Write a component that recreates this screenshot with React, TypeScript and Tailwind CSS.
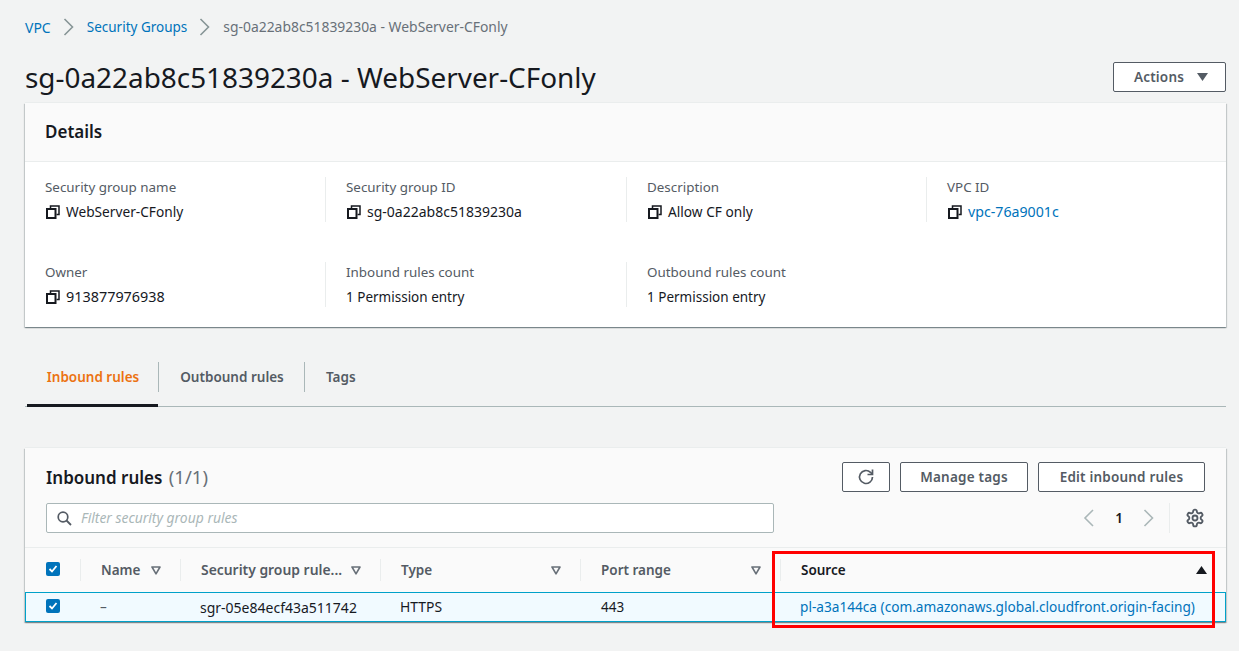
const font = { fontFamily: '"Noto Sans", sans-serif' };

const CopyIcon = () => (
  <svg width="14" height="14" viewBox="0 0 14 14" fill="none" className="ml-[1px] shrink-0 text-[#16191f]">
    <path d="M4.5 3.5V1h8.5v8.5h-2.5" stroke="currentColor" strokeWidth="1.5" />
    <rect x="1" y="4" width="8.5" height="9" stroke="currentColor" strokeWidth="2" />
  </svg>
);

const Chevron = ({ left, color }: { left?: boolean; color: string }) => (
  <svg width="12" height="18" viewBox="0 0 12 18" fill="none">
    <path d={left ? 'M11 1 3 9l8 8' : 'M1.5 1l8 8-8 8'} stroke={color} strokeWidth="1.6" />
  </svg>
);

const FilterIcon = () => (
  <svg width="10" height="9" viewBox="0 0 10 9" fill="none" className="shrink-0">
    <path d="M1 1h8L5 7.8z" stroke="#687078" strokeWidth="1.6" strokeLinejoin="round" />
  </svg>
);

const Check = () => (
  <span className="flex h-[14px] w-[14px] items-center justify-center rounded-[2px] bg-[#0073bb]">
    <svg width="10" height="10" viewBox="0 0 10 10" fill="none">
      <path d="M1.5 5 4 7.5 8.5 2" stroke="#fff" strokeWidth="1.8" />
    </svg>
  </span>
);

const Field = ({ label, value, copy, link, first, size = 'text-[13.5px]' }: { label: string; value: string; copy?: boolean; link?: boolean; first?: boolean; size?: string }) => (
  <div className={first ? 'h-[45px] pl-0' : 'h-[45px] border-l border-[#eaeded] pl-5'}>
    <div className="h-[21px] text-[13.4px] leading-[21px] text-[#545b64]">{label}</div>
    <div className="mt-[4px] flex items-center gap-[6px] leading-[20px] text-[#16191f]">
      {copy && <CopyIcon />}
      <span className={`${size} ${link ? 'text-[#0073bb]' : ''}`}>{value}</span>
    </div>
  </div>
);

const HeadCell = ({ label, dark, size = 'text-[13.5px]' }: { label: string; dark?: boolean; size?: string }) => (
  <div className="my-auto flex h-[22px] items-center justify-between border-l border-[#eaeded] pr-[19px] pl-5">
    <span className={`${size} font-semibold whitespace-nowrap ${dark ? 'text-[#16191f]' : 'text-[#545b64]'}`}>{label}</span>
    {dark ? (
      <svg width="11" height="8" viewBox="0 0 11 8"><path d="M5.5 0L11 8H0z" fill="#16191f" /></svg>
    ) : (
      <FilterIcon />
    )}
  </div>
);

const Button = ({ children, className }: { children: React.ReactNode; className: string }) => (
  <div className={`flex h-[30px] items-center justify-center rounded-[2px] border border-[#545b64] bg-white text-[13.5px] font-semibold tracking-[0.2px] text-[#545b64] ${className}`}>
    {children}
  </div>
);

export default function App() {
  return (
    <div style={font} className="relative h-[651px] w-[1239px] overflow-hidden bg-[#f2f3f3] pr-[13px] pl-[25px]">
      {/* breadcrumb */}
      <div className="flex h-[54px] items-center text-[13.5px]">
        <span className="text-[14px] text-[#0073bb]">VPC</span>
        <span className="mx-[12px]"><Chevron color="#879596" /></span>
        <span className="text-[#0073bb]">Security Groups</span>
        <span className="mx-[12px]"><Chevron color="#879596" /></span>
        <span className="text-[13.9px] text-[#687078]">sg-0a22ab8c51839230a - WebServer-CFonly</span>
      </div>

      {/* title */}
      <div className="flex h-[46px] items-center justify-between">
        <h1 className="text-[27.9px] leading-[46px] font-normal text-[#16191f]">sg-0a22ab8c51839230a - WebServer-CFonly</h1>
        <Button className="w-[113px] gap-[13px] pl-[3px]">
          Actions
          <svg width="11" height="8" viewBox="0 0 11 8"><path d="M0 0h11L5.5 8z" fill="#545b64" /></svg>
        </Button>
      </div>

      {/* details card */}
      <section className="mt-[3px] h-[224px] bg-white shadow-[0_1px_1px_0_rgba(0,28,36,0.3),1px_1px_1px_0_rgba(0,28,36,0.15),-1px_1px_1px_0_rgba(0,28,36,0.15),0_-1px_0_0_#eaeded]">
        <div className="flex h-[59px] items-center border-b border-[#eaeded] bg-[#fafafa] pl-5 text-[17px] font-semibold text-[#16191f]">Details</div>
        <div className="grid grid-cols-[280px_301px_300px_1fr] gap-y-[40px] pt-[15px] pl-5">
          <Field first label="Security group name" value="WebServer-CFonly" copy size="text-[13.7px]" />
          <Field label="Security group ID" value="sg-0a22ab8c51839230a" copy size="text-[14px]" />
          <Field label="Description" value="Allow CF only" copy size="text-[13.7px]" />
          <Field label="VPC ID" value="vpc-76a9001c" copy link size="text-[14.2px]" />
          <Field first label="Owner" value="913877976938" copy size="text-[14.4px]" />
          <Field label="Inbound rules count" value="1 Permission entry" />
          <Field label="Outbound rules count" value="1 Permission entry" />
        </div>
      </section>

      {/* tabs */}
      <div className="mt-[33px] flex h-[47px] border-b border-[#aab7b8] pl-[2px] text-[13.5px] font-semibold">
        <div className="flex h-[47px] w-[131px] items-start justify-center border-b-[3px] border-[#16191f] pt-[7px] pl-[1px] text-[#ec7211]">
          Inbound rules
        </div>
        <div className="mt-[2px] flex h-[30px] w-[146px] items-center justify-center border-l border-[#aab7b8] pl-[1px] text-[#545b64]">Outbound rules</div>
        <div className="mt-[2px] flex h-[30px] w-[73px] items-center border-l border-[#aab7b8] pl-[21px] text-[#545b64]">Tags</div>
      </div>

      {/* inbound rules card */}
      <section className="mt-[41px] bg-[#fafafa] shadow-[0_1px_1px_0_rgba(0,28,36,0.3),1px_1px_1px_0_rgba(0,28,36,0.15),-1px_1px_1px_0_rgba(0,28,36,0.15),0_-1px_0_0_#eaeded]">
        <div className="flex h-[100px] flex-col border-b border-[#eaeded] pt-[14px] pr-[21px] pl-[21px]">
          <div className="flex h-[30px] items-center justify-between">
            <div className="text-[17px] font-semibold text-[#16191f]">
              Inbound rules <span className="ml-[2px] text-[18.5px] font-normal text-[#687078]">(1/1)</span>
            </div>
            <div className="flex gap-[10px]">
              <Button className="w-[48px]">
                <svg width="18" height="18" viewBox="0 0 18 18" fill="none">
                  <path d="M15.5 9a6.5 6.5 0 1 1-2-4.7L15.3 6" stroke="#545b64" strokeWidth="1.7" />
                  <path d="M15.5 1.5v5h-5" stroke="#545b64" strokeWidth="1.7" />
                </svg>
              </Button>
              <Button className="w-[128px]">Manage tags</Button>
              <Button className="w-[167px]">Edit inbound rules</Button>
            </div>
          </div>
          <div className="mt-[11px] flex h-[30px] items-center">
            <div className="flex h-[30px] w-[728px] items-center gap-[9px] rounded-[2px] border border-[#aab7b8] bg-white pl-[10px]">
              <svg width="15" height="15" viewBox="0 0 15 15" fill="none">
                <circle cx="6" cy="6" r="4.8" stroke="#545b64" strokeWidth="1.7" />
                <path d="M9.5 9.5 14 14" stroke="#545b64" strokeWidth="1.8" />
              </svg>
              <span className="text-[13.9px] text-[#aab7b8] italic">Filter security group rules</span>
            </div>
            <div className="ml-auto flex items-center">
              <span className="ml-[2px]"><Chevron left color="#aab7b8" /></span>
              <span className="mr-[20px] ml-[21px] text-[13.5px] font-semibold text-[#16191f]">1</span>
              <Chevron color="#aab7b8" />
              <span className="mr-[15px] ml-[14px] h-[30px] border-l border-[#eaeded]" />
              <svg width="20" height="20" viewBox="0 0 24 24" fill="none" stroke="#545b64" strokeWidth="2.2">
                <path d="M12.2 2h-.4a2 2 0 0 0-2 2v.2a2 2 0 0 1-1 1.7l-.4.3a2 2 0 0 1-2 0l-.2-.1a2 2 0 0 0-2.7.7l-.2.4a2 2 0 0 0 .7 2.7l.2.1a2 2 0 0 1 1 1.7v.6a2 2 0 0 1-1 1.7l-.2.1a2 2 0 0 0-.7 2.7l.2.4a2 2 0 0 0 2.7.7l.2-.1a2 2 0 0 1 2 0l.4.3a2 2 0 0 1 1 1.7v.2a2 2 0 0 0 2 2h.4a2 2 0 0 0 2-2v-.2a2 2 0 0 1 1-1.7l.4-.3a2 2 0 0 1 2 0l.2.1a2 2 0 0 0 2.7-.7l.2-.4a2 2 0 0 0-.7-2.7l-.2-.1a2 2 0 0 1-1-1.7v-.6a2 2 0 0 1 1-1.7l.2-.1a2 2 0 0 0 .7-2.7l-.2-.4a2 2 0 0 0-2.7-.7l-.2.1a2 2 0 0 1-2 0l-.4-.3a2 2 0 0 1-1-1.7V4a2 2 0 0 0-2-2z" />
                <circle cx="12" cy="12" r="3" />
              </svg>
            </div>
          </div>
        </div>

        <div className="grid h-[44px] grid-cols-[55px_100px_200px_200px_200px_1fr]">
          <div className="flex items-center pb-[2px] pl-[21px]"><Check /></div>
          <HeadCell label="Name" />
          <HeadCell label="Security group rule..." size="text-[13.9px]" />
          <HeadCell label="Type" />
          <HeadCell label="Port range" />
          <HeadCell label="Source" dark />
        </div>

        <div className="grid h-[30px] grid-cols-[55px_100px_200px_200px_200px_1fr] items-center border border-[#00a1c9] bg-[#f1faff] text-[13.5px] text-[#16191f]">
          <div className="pb-[2px] pl-5"><Check /></div>
          <div className="pl-[19px] text-[#545b64]">–</div>
          <div className="pl-[19px] text-[14px]">sgr-05e84ecf43a511742</div>
          <div className="pl-[19px] text-[13.9px]">HTTPS</div>
          <div className="pl-5">443</div>
          <div className="pl-[19px] text-[13.65px] whitespace-nowrap text-[#0073bb]">pl-a3a144ca (com.amazonaws.global.cloudfront.origin-facing)</div>
        </div>
      </section>

      {/* red highlight over the source column */}
      <div className="absolute top-[551px] left-[772px] h-[77px] w-[443px] border-[3px] border-[#ff0000]" />
    </div>
  );
}
